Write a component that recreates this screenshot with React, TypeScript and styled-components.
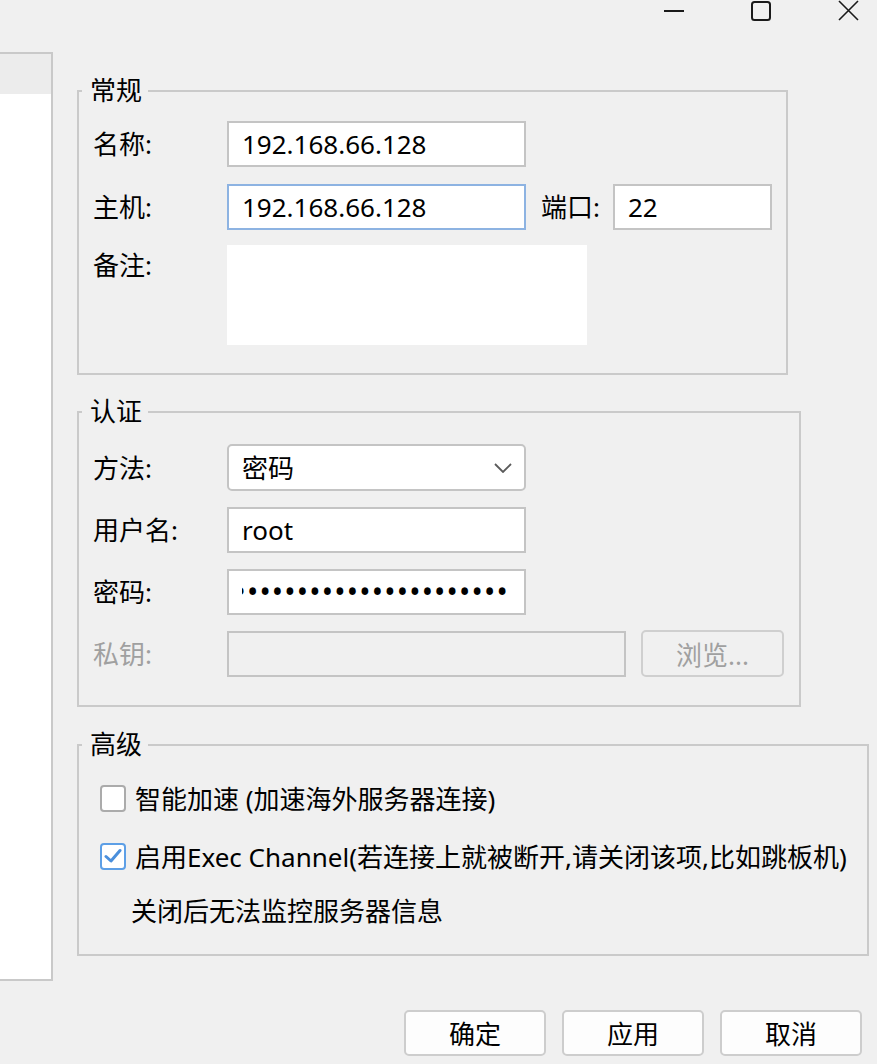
import React from "react";
import styled, { createGlobalStyle } from "styled-components";

const GlobalStyle = createGlobalStyle`
  html, body {
    margin: 0;
    padding: 0;
    background: #f0f0f0;
  }
  *, *::before, *::after { box-sizing: border-box; }
  body {
    font-family: "Noto Sans", "Noto Sans CJK SC", sans-serif;
    font-size: 26px;
    color: #000;
  }
`;

const Page = styled.div`
  width: 877px;
  height: 1064px;
  background: #f0f0f0;
  display: flex;
  flex-direction: column;
  overflow: hidden;
`;

const TitleBar = styled.div`
  height: 24px;
  display: flex;
  justify-content: flex-end;
  align-items: flex-start;
  padding-right: 18px;
  gap: 67px;
`;

const Ctrl = styled.div<{ $w: number }>`
  width: ${(p) => p.$w}px;
  height: 22px;
  display: flex;
  align-items: flex-start;
  justify-content: center;
`;

const Body = styled.div`
  margin-top: 28px;
  display: flex;
  align-items: flex-start;
`;

const LeftPanel = styled.div`
  width: 53px;
  height: 929px;
  background: #fff;
  border: 2px solid #c9c9c9;
  border-left: none;
  display: flex;
  flex-direction: column;
`;

const LeftItem = styled.div`
  height: 40px;
  background: #ececec;
`;

const Main = styled.div`
  flex: 1;
  padding-left: 24px;
  padding-top: 38px;
  display: flex;
  flex-direction: column;
`;

const Group = styled.section<{ $w: number; $mt: number; $pt: number; $pb: number }>`
  position: relative;
  width: ${(p) => p.$w}px;
  margin-top: ${(p) => p.$mt}px;
  border: 2px solid #cacaca;
  padding: ${(p) => p.$pt}px 14px ${(p) => p.$pb}px 14px;
  display: flex;
  flex-direction: column;
`;

const Legend = styled.span`
  position: absolute;
  top: -16px;
  left: 3px;
  padding: 0 6px 0 8px;
  background: #f0f0f0;
  line-height: 28px;
`;

const Rows = styled.div<{ $gap: number }>`
  display: flex;
  flex-direction: column;
  gap: ${(p) => p.$gap}px;
`;

const Row = styled.div<{ $top?: boolean; $mt?: number }>`
  display: flex;
  align-items: ${(p) => (p.$top ? "flex-start" : "center")};
  margin-top: ${(p) => p.$mt ?? 0}px;
`;

const Label = styled.div<{ $disabled?: boolean; $padTop?: number }>`
  width: 134px;
  flex: none;
  line-height: 30px;
  padding-top: ${(p) => p.$padTop ?? 0}px;
  color: ${(p) => (p.$disabled ? "#a0a0a0" : "#000")};
`;

const Field = styled.div<{ $w: number; $focus?: boolean; $disabled?: boolean }>`
  width: ${(p) => p.$w}px;
  height: 46px;
  flex: none;
  background: ${(p) => (p.$disabled ? "#f0f0f0" : "#fff")};
  border: 2px solid ${(p) => (p.$focus ? "#8db3e2" : "#c4c4c4")};
  padding: 0 13px;
  display: flex;
  align-items: center;
  line-height: 30px;
  white-space: nowrap;
  overflow: hidden;
`;

const SideLabel = styled.div`
  margin-left: 15px;
  width: 72px;
  flex: none;
  line-height: 30px;
`;

const Remark = styled.div`
  width: 360px;
  height: 100px;
  background: #fff;
`;

const Select = styled.div`
  width: 299px;
  height: 47px;
  background: #fff;
  border: 2px solid #c4c4c4;
  border-radius: 5px;
  padding: 0 12px 0 13px;
  display: flex;
  align-items: center;
  justify-content: space-between;
  line-height: 30px;
`;

const Dots = styled.div`
  width: 100%;
  display: flex;
  justify-content: flex-end;
  overflow: hidden;
  white-space: nowrap;
  font-size: 30px;
  letter-spacing: 1.2px;
  padding-right: 2px;
`;

const BrowseButton = styled.div`
  margin-left: 15px;
  width: 143px;
  height: 47px;
  border: 2px solid #cfcfcf;
  border-radius: 5px;
  display: flex;
  align-items: center;
  justify-content: center;
  color: #a0a0a0;
`;

const CheckRow = styled.div<{ $indent?: number; $mt?: number }>`
  height: 36px;
  display: flex;
  align-items: center;
  padding-left: ${(p) => p.$indent ?? 7}px;
  margin-top: ${(p) => p.$mt ?? 0}px;
  white-space: nowrap;
`;

const Box = styled.div<{ $checked?: boolean }>`
  width: 26px;
  height: 27px;
  flex: none;
  border: 2px solid ${(p) => (p.$checked ? "#5d9fe6" : "#ababab")};
  border-radius: 4px;
  background: #fff;
  margin-right: 9px;
  display: flex;
  align-items: center;
  justify-content: center;
`;

const Footer = styled.div`
  margin-top: 54px;
  display: flex;
  justify-content: flex-end;
  gap: 16px;
  padding-right: 15px;
`;

const Button = styled.div`
  width: 142px;
  height: 46px;
  background: #fdfdfd;
  border: 2px solid #cdcdcd;
  border-radius: 5px;
  display: flex;
  align-items: center;
  justify-content: center;
`;

export default function App() {
  return (
    <Page>
      <GlobalStyle />
      <TitleBar>
        <Ctrl $w={20}>
          <svg width="20" height="22" viewBox="0 0 20 22">
            <line x1="0" y1="11" x2="20" y2="11" stroke="#1a1a1a" strokeWidth="2" />
          </svg>
        </Ctrl>
        <Ctrl $w={20}>
          <svg width="20" height="22" viewBox="0 0 20 22">
            <rect x="1" y="2" width="18" height="18" rx="2.5" fill="none" stroke="#1a1a1a" strokeWidth="2" />
          </svg>
        </Ctrl>
        <Ctrl $w={21}>
          <svg width="21" height="22" viewBox="0 0 21 22">
            <path d="M1 1 L20 20 M20 1 L1 20" stroke="#1a1a1a" strokeWidth="1.6" fill="none" />
          </svg>
        </Ctrl>
      </TitleBar>
      <Body>
        <LeftPanel>
          <LeftItem />
        </LeftPanel>
        <Main>
          <Group $w={711} $mt={0} $pt={29} $pb={28}>
            <Legend>常规</Legend>
            <Rows $gap={17}>
              <Row>
                <Label>名称:</Label>
                <Field $w={299}>192.168.66.128</Field>
              </Row>
              <Row>
                <Label>主机:</Label>
                <Field $w={299} $focus>192.168.66.128</Field>
                <SideLabel>端口:</SideLabel>
                <Field $w={159}>22</Field>
              </Row>
              <Row $top $mt={-2}>
                <Label $padTop={5}>备注:</Label>
                <Remark />
              </Row>
            </Rows>
          </Group>

          <Group $w={724} $mt={36} $pt={31} $pb={28}>
            <Legend>认证</Legend>
            <Rows $gap={16}>
              <Row>
                <Label>方法:</Label>
                <Select>
                  <span>密码</span>
                  <svg width="18" height="10" viewBox="0 0 18 10">
                    <path d="M1 1 L9 9 L17 1" fill="none" stroke="#5a5a5a" strokeWidth="1.8" />
                  </svg>
                </Select>
              </Row>
              <Row>
                <Label>用户名:</Label>
                <Field $w={299}>root</Field>
              </Row>
              <Row>
                <Label>密码:</Label>
                <Field $w={299}>
                  <Dots>{"•".repeat(24)}</Dots>
                </Field>
              </Row>
              <Row $mt={-1}>
                <Label $disabled>私钥:</Label>
                <Field $w={399} $disabled />
                <BrowseButton>浏览...</BrowseButton>
              </Row>
            </Rows>
          </Group>

          <Group $w={792} $mt={37} $pt={34} $pb={26}>
            <Legend>高级</Legend>
            <CheckRow>
              <Box />
              智能加速 (加速海外服务器连接)
            </CheckRow>
            <CheckRow $mt={22}>
              <Box $checked>
                <svg width="18" height="16" viewBox="0 0 18 16">
                  <path d="M2 8.5 L7 13 L16 2.5" fill="none" stroke="#4a8fdc" strokeWidth="3" strokeLinecap="round" strokeLinejoin="round" />
                </svg>
              </Box>
              启用Exec Channel(若连接上就被断开,请关闭该项,比如跳板机)
            </CheckRow>
            <CheckRow $indent={38} $mt={18}>
              关闭后无法监控服务器信息
            </CheckRow>
          </Group>

          <Footer>
            <Button>确定</Button>
            <Button>应用</Button>
            <Button>取消</Button>
          </Footer>
        </Main>
      </Body>
    </Page>
  );
}
